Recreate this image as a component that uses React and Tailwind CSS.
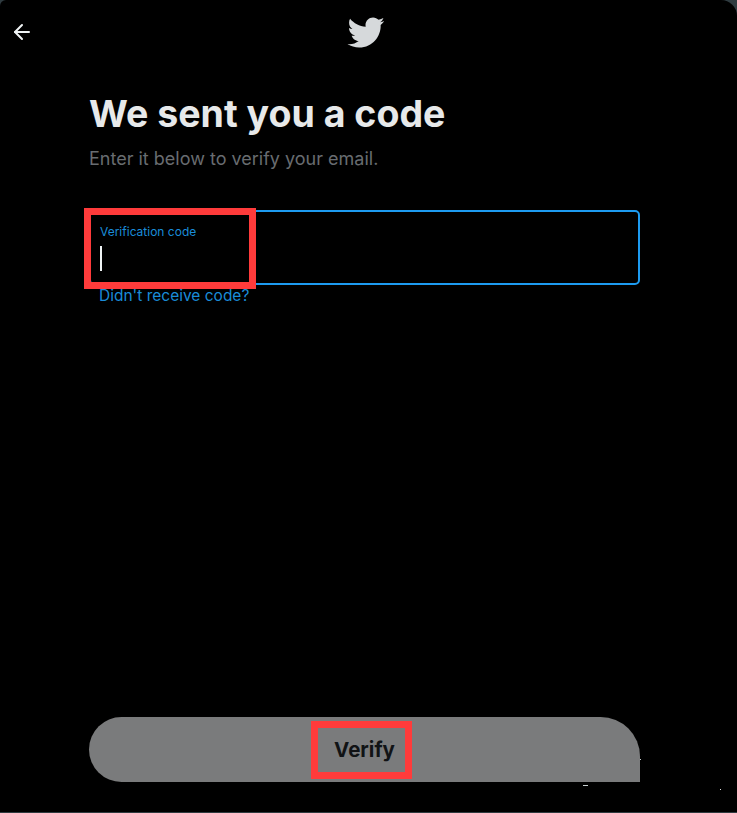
import React from 'react';
import { ArrowLeft } from 'lucide-react';

const BIRD =
  'M23.643 4.937c-.835.37-1.732.62-2.675.733.962-.576 1.7-1.49 2.048-2.578-.9.534-1.897.922-2.958 1.13-.85-.904-2.06-1.47-3.4-1.47-2.572 0-4.658 2.086-4.658 4.66 0 .364.042.718.12 1.06-3.873-.195-7.304-2.05-9.602-4.868-.4.69-.63 1.49-.63 2.342 0 1.616.823 3.043 2.072 3.878-.764-.025-1.482-.234-2.11-.583v.06c0 2.257 1.605 4.14 3.737 4.568-.392.106-.803.162-1.227.162-.3 0-.593-.028-.877-.082.593 1.85 2.313 3.198 4.352 3.234-1.595 1.25-3.604 1.995-5.786 1.995-.376 0-.747-.022-1.112-.065 2.062 1.323 4.51 2.093 7.14 2.093 8.57 0 13.255-7.098 13.255-13.254 0-.2-.005-.402-.014-.602.91-.658 1.7-1.477 2.323-2.41z';

function App() {
  return (
    <div className="relative w-[737px] h-[813px] overflow-hidden bg-[#2f3b40] font-['Inter',sans-serif]">
      <main className="flex flex-col h-[812px] bg-black rounded-tl-[6px] rounded-tr-[16px]">
        {/* top bar */}
        <header className="relative flex items-center justify-center h-[66px] shrink-0">
          <button className="absolute left-[10px] top-[20px] text-[#eff3f4]">
            <ArrowLeft className="w-[24px] h-[24px]" strokeWidth={2} />
          </button>
          <svg viewBox="0 0 24 24" className="w-[39px] h-[39px] mt-[-2px] ml-[-7px] fill-[#d6d9db]">
            <path d={BIRD} />
          </svg>
        </header>

        <section className="flex flex-col flex-1 px-[89px]">
          <h1 className="mt-[24px] text-[37.5px] leading-[48px] font-bold text-[#e7e9ea]">We sent you a code</h1>
          <p className="mt-[9px] text-[18px] leading-[24px] text-[#686c70]">Enter it below to verify your email.</p>

          <div className="mt-[39px] flex flex-col w-[551px] h-[75px] border-2 border-[#1d9bf0] rounded-[5px] pl-[9px] pt-[12px]">
            <span className="text-[12px] leading-[16px] text-[#1a8cd8]">Verification code</span>
            <span className="mt-[6px] w-[2px] h-[25px] bg-[#eff3f4]" />
          </div>
          <a className="mt-[1px] ml-[10px] text-[15.5px] leading-[20px] text-[#1a8cd8]">Didn't receive code?</a>

          <button className="mt-auto mb-[30px] pt-[1px] flex items-center justify-center w-[551px] h-[65px] bg-[#7a7b7c] rounded-l-[33px] rounded-tr-[40px] text-[20.5px] font-bold text-[#111315]">
            Verify
          </button>
        </section>
      </main>

      {/* red annotation boxes */}
      <div className="absolute left-[84px] top-[208px] w-[172px] h-[81px] border-[7px] border-[#ff3b3b]" />
      <div className="absolute left-[311px] top-[721px] w-[101px] h-[58px] border-[7px] border-[#ff3b3b]" />

      {/* stray specks */}
      <div className="absolute left-[583px] top-[785px] w-[5px] h-px bg-[#c8d0d0]" />
      <div className="absolute left-[640px] top-[759px] w-px h-px bg-[#c8d0d0]" />
      <div className="absolute left-[720px] top-[789px] w-px h-px bg-[#e0e0e0]" />
    </div>
  );
}

export default App;
